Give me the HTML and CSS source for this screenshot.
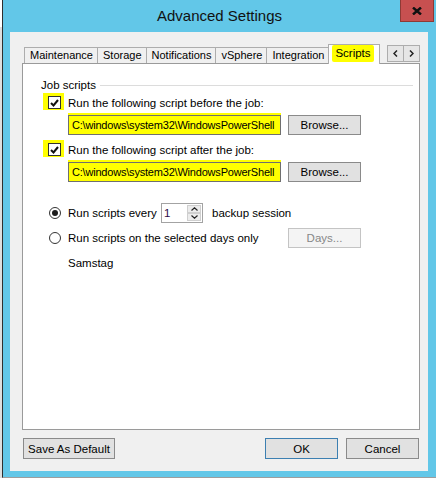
FILE: index.html
```html
<!DOCTYPE html>
<html lang="en">
<head>
<meta charset="UTF-8">
<title>Advanced Settings</title>
<link rel="stylesheet" href="styles.css">
</head>
<body>

<div class="screen">
    <div class="backdrop"></div>

    <!-- Dialog window -->
    <div class="window">
        <div class="titlebar">
            <h1 class="title">Advanced Settings</h1>
            <button class="close" type="button">
                <svg width="10" height="8" viewBox="0 0 10 8"><path d="M1 0.5 L9 7.5 M9 0.5 L1 7.5" stroke="#111" stroke-width="2.4"/></svg>
            </button>
        </div>

        <div class="client">
            <!-- Tab strip -->
            <div class="tabs">
                <div class="tab">Maintenance</div>
                <div class="tab">Storage</div>
                <div class="tab">Notifications</div>
                <div class="tab">vSphere</div>
                <div class="tab">Integration</div>
                <div class="tab tab-active"><span class="marker">Scripts</span></div>
                <div class="tab-scroll">
                    <span class="scroll-btn"><svg width="5" height="7" viewBox="0 0 5 7"><path d="M4 0.5 L1 3.5 L4 6.5" fill="none" stroke="#222" stroke-width="1.5"/></svg></span>
                    <span class="scroll-btn"><svg width="5" height="7" viewBox="0 0 5 7"><path d="M1 0.5 L4 3.5 L1 6.5" fill="none" stroke="#222" stroke-width="1.5"/></svg></span>
                </div>
            </div>

            <!-- Scripts page -->
            <div class="panel">
                <div class="legend">
                    <span>Job scripts</span>
                    <span class="legend-line"></span>
                </div>

                <div class="group">
                    <div class="row row-check">
                        <span class="check"><svg width="9" height="8" viewBox="0 0 9 8"><path d="M1 4 L3.5 6.5 L8 1" fill="none" stroke="#111" stroke-width="2"/></svg></span>
                        <span class="wide">Run the following script before the job:</span>
                    </div>
                    <div class="row row-path">
                        <div class="textbox">C:\windows\system32\WindowsPowerShell</div>
                        <button class="btn btn-browse" type="button">Browse...</button>
                    </div>

                    <div class="row row-check row-check-next">
                        <span class="check"><svg width="9" height="8" viewBox="0 0 9 8"><path d="M1 4 L3.5 6.5 L8 1" fill="none" stroke="#111" stroke-width="2"/></svg></span>
                        <span class="wide">Run the following script after the job:</span>
                    </div>
                    <div class="row row-path">
                        <div class="textbox">C:\windows\system32\WindowsPowerShell</div>
                        <button class="btn btn-browse" type="button">Browse...</button>
                    </div>

                    <div class="row row-radio row-radio-first">
                        <span class="radio radio-on"></span>
                        <div class="wide every">
                            <span class="every-label">Run scripts every</span>
                            <div class="spin">
                                <span class="spin-value">1</span>
                                <div class="spin-btns">
                                    <span class="spin-btn"><svg width="7" height="4" viewBox="0 0 7 4"><path d="M0.5 3.5 L3.5 0.8 L6.5 3.5" fill="none" stroke="#222" stroke-width="1.2"/></svg></span>
                                    <span class="spin-btn"><svg width="7" height="4" viewBox="0 0 7 4"><path d="M0.5 0.5 L3.5 3.2 L6.5 0.5" fill="none" stroke="#222" stroke-width="1.2"/></svg></span>
                                </div>
                            </div>
                            <span class="every-unit">backup session</span>
                        </div>
                    </div>

                    <div class="row row-radio">
                        <span class="radio"></span>
                        <span class="nowrap">Run scripts on the selected days only</span>
                        <button class="btn btn-browse btn-disabled" type="button">Days...</button>
                    </div>

                    <div class="row row-note">
                        <span class="note">Samstag</span>
                    </div>
                </div>
            </div>

            <!-- Dialog buttons -->
            <div class="footer">
                <button class="btn btn-default" type="button">Save As Default</button>
                <button class="btn btn-ok" type="button">OK</button>
                <button class="btn btn-cancel" type="button">Cancel</button>
            </div>
        </div>
    </div>
</div>

</body>
</html>
```

FILE: styles.css
```css
/* General */
* {
    margin: 0;
    padding: 0;
    box-sizing: border-box;
}

body {
    font-family: "Liberation Sans", Arial, sans-serif;
    font-size: 11.5px;
    color: #000;
    background: #fff;
}

button {
    font: inherit;
    color: inherit;
}

.screen {
    display: flex;
    width: 436px;
    height: 478px;
    overflow: hidden;
}

/* bit of the window behind the dialog */
.backdrop {
    width: 2px;
    flex: none;
    background: linear-gradient(#fff 0 27px, #dedede 27px);
}

/* Window frame */
.window {
    flex: 1;
    min-width: 0;
    display: flex;
    flex-direction: column;
    background: #62c7e8;
    border-left: 1px solid #2e2e2e;
    border-bottom: 1px solid #9d9d9d;
}

.titlebar {
    height: 32px;
    display: grid;
    grid-template-columns: 1fr auto 1fr;
}

.title {
    grid-column: 2;
    font-size: 15px;
    font-weight: normal;
    line-height: 32px;
    color: #111;
}

.close {
    grid-column: 3;
    justify-self: end;
    width: 34px;
    height: 22px;
    margin-right: 2px;
    background: #c75050;
    border: 1px solid #8e3a35;
    border-top: none;
    display: flex;
    align-items: center;
    justify-content: center;
}

.client {
    flex: 1;
    min-width: 0;
    margin: 0 8px 6px 7px;
    background: #f0f0f0;
    padding: 12px 8px 12px 12px;
    display: flex;
    flex-direction: column;
}

/* Tabs */
.tabs {
    display: flex;
    align-items: flex-end;
    height: 19px;
    padding-left: 2px;
}

.tab {
    height: 16px;
    padding: 0 4px 0 5px;
    margin-left: -1px;
    border: 1px solid #adadad;
    border-bottom: none;
    background: #f0f0f0;
    font-size: 11px;
    line-height: 15px;
    white-space: nowrap;
}

.tab:first-child {
    margin-left: 0;
}

.tab-active {
    position: relative;
    z-index: 1;
    height: 20px;
    margin: 0 -2px -1px -1px;
    padding: 0 5px 0 3px;
    background: #fff;
    font-size: 11.5px;
    line-height: 17px;
}

.marker {
    background: #ffff00;
    padding: 2px 3px 3px 3px;
    border-radius: 2px;
}

.tab-scroll {
    display: flex;
    align-self: flex-start;
    margin: 1px 0 0 auto;
}

.scroll-btn {
    width: 17px;
    height: 17px;
    border: 1px solid #adadad;
    background: #e6e6e6;
    display: flex;
    align-items: center;
    justify-content: center;
}

.scroll-btn + .scroll-btn {
    margin-left: -1px;
}

/* Tab page */
.panel {
    flex: 1;
    background: #fff;
    border: 1px solid #9a9a9a;
    padding: 14px 6px 0 18px;
}

.legend {
    display: flex;
    align-items: center;
    height: 14px;
}

.legend-line {
    flex: 1;
    border-top: 1px solid #dcdcdc;
    margin-left: 4px;
}

.group {
    padding-left: 7px;
}

.row {
    display: grid;
    grid-template-columns: 20px 213px 7px 73px;
    align-items: center;
}

.wide {
    grid-column: 2 / 5;
}

.nowrap {
    grid-column: 2 / 4;
    white-space: nowrap;
}

.row-check {
    height: 13px;
    margin-top: 4px;
}

.row-check-next {
    margin-top: 8px;
}

.row-path {
    height: 20px;
    margin-top: 6px;
}

.row-radio {
    height: 20px;
    margin-top: 5px;
}

.row-radio-first {
    margin-top: 21px;
}

.row-note {
    height: 14px;
    margin-top: 8px;
}

.note {
    grid-column: 2;
}

/* Check boxes and radios */
.check {
    width: 13px;
    height: 13px;
    border: 1px solid #333;
    background: #fff;
    display: flex;
    align-items: center;
    justify-content: center;
    box-shadow: -3px -1px 0 2px #ffff00, 1px -1px 0 2px #ffff00;
}

.radio {
    width: 12px;
    height: 12px;
    margin-left: 1px;
    border: 1px solid #333;
    border-radius: 50%;
    background: #fff;
    display: flex;
    align-items: center;
    justify-content: center;
}

.radio-on::after {
    content: "";
    width: 6px;
    height: 6px;
    border-radius: 50%;
    background: #1c1c1c;
}

/* Inputs */
.textbox {
    grid-column: 2;
    height: 20px;
    border: 1px solid #6f6f6f;
    background: #ffff00;
    padding-left: 3px;
    font-size: 11px;
    letter-spacing: -0.2px;
    line-height: 18px;
    white-space: nowrap;
    overflow: hidden;
    box-shadow: 0 -2px 0 #ffff00;
}

.every {
    display: flex;
    align-items: center;
}

.every-label {
    width: 93px;
}

.spin {
    display: flex;
    width: 42px;
    height: 20px;
    border: 1px solid #a3a3a3;
    background: #fff;
}

.spin-value {
    flex: 1;
    padding-left: 2px;
    line-height: 18px;
    color: #2d0b4a;
}

.spin-btns {
    width: 16px;
    display: flex;
    flex-direction: column;
    padding: 1px;
}

.spin-btn {
    flex: 1;
    background: #ececec;
    border: 1px solid #cfcfcf;
    display: flex;
    align-items: center;
    justify-content: center;
}

.every-unit {
    margin-left: 9px;
}

/* Buttons */
.btn {
    height: 20px;
    background: #e1e1e1;
    border: 1px solid #8a8a8a;
    text-align: center;
}

.btn-browse {
    grid-column: 4;
}

.btn-disabled {
    background: #f4f4f4;
    border-color: #c4c4c4;
    color: #878787;
}

.footer {
    display: flex;
    gap: 8px;
    margin-top: 8px;
    padding: 0 1px;
}

.footer .btn {
    height: 21px;
    width: 73px;
}

.btn-default {
    width: 92px !important;
    margin-right: auto;
}

.btn-ok {
    border-color: #3c7fb1;
}
```
